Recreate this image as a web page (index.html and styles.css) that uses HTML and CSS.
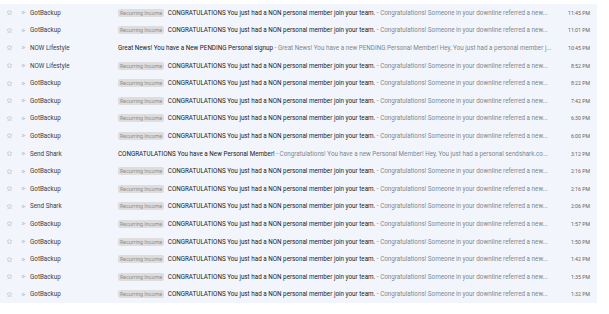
FILE: index.html
```html
<!DOCTYPE html>
<html lang="en">
<head>
  <meta charset="UTF-8" />
  <meta name="viewport" content="width=device-width, initial-scale=1.0" />
  <title>Inbox</title>
  <link rel="stylesheet" href="styles.css">
</head>
<body>
  <ul class="mail-list" id="mailList"></ul>

  <script>
    const congrats = {
      label: 'Recurring Income',
      subject: 'CONGRATULATIONS You just had a NON personal member join your team.',
      preview: 'Congratulations! Someone in your downline referred a new...'
    };

    const rows = [
      ['GotBackup', congrats, '11:45 PM'],
      ['GotBackup', congrats, '11:01 PM'],
      ['NOW Lifestyle', {
        subject: 'Great News! You have a New PENDING Personal signup',
        preview: 'Great News! You have a new PENDING Personal Member! Hey, You just had a personal member j...'
      }, '10:45 PM'],
      ['NOW Lifestyle', congrats, '8:52 PM'],
      ['GotBackup', congrats, '8:22 PM'],
      ['GotBackup', congrats, '7:42 PM'],
      ['GotBackup', congrats, '6:30 PM'],
      ['GotBackup', congrats, '6:00 PM'],
      ['Send Shark', {
        subject: 'CONGRATULATIONS You have a New Personal Member!',
        preview: 'Congratulations! You have a new Personal Member! Hey, You just had a personal sendshark.co...'
      }, '3:12 PM'],
      ['GotBackup', congrats, '2:16 PM'],
      ['GotBackup', congrats, '2:16 PM'],
      ['Send Shark', congrats, '2:06 PM'],
      ['GotBackup', congrats, '1:57 PM'],
      ['GotBackup', congrats, '1:50 PM'],
      ['GotBackup', congrats, '1:42 PM'],
      ['GotBackup', congrats, '1:35 PM'],
      ['GotBackup', congrats, '1:32 PM']
    ];

    const star = '<svg viewBox="0 0 24 24" width="7" height="7"><path d="M12 3.5l2.6 5.5 6 .7-4.5 4.1 1.2 5.9L12 16.7 6.7 19.7l1.2-5.9L3.4 9.7l6-.7z" fill="none" stroke="#b5b9be" stroke-width="1.8" stroke-linejoin="round"/></svg>';
    const chevron = '<svg viewBox="0 0 24 24" width="5" height="5"><path d="M5 6l6 6-6 6M12 6l6 6-6 6" fill="none" stroke="#9aa0a6" stroke-width="3.4"/></svg>';

    const list = document.getElementById('mailList');
    rows.forEach(([sender, mail, time]) => {
      const li = document.createElement('li');
      li.className = 'mail-row';
      li.innerHTML = `
        <span class="star">${star}</span>
        <span class="important">${chevron}</span>
        <span class="sender">${sender}</span>
        <span class="content">
          ${mail.label ? `<span class="label">${mail.label}</span>` : ''}
          <span class="subject">${mail.subject}</span>
          <span class="preview"> - ${mail.preview}</span>
        </span>
        <span class="time">${time}</span>`;
      list.appendChild(li);
    });
  </script>
</body>
</html>
```

FILE: styles.css
```css
* { box-sizing: border-box; }
body {
  margin: 0;
  background: #fff;
  font-family: Roboto, "Liberation Sans", Arial, sans-serif;
  color: #202124;
}
.mail-list {
  list-style: none;
  margin: 4px 0 0;
  padding: 0;
  width: 597px;
  background: #f2f6fc;
}
.mail-row {
  display: flex;
  align-items: center;
  height: 17.6px;
  font-size: 6.3px;
  white-space: nowrap;
}
.mail-row > span { flex-shrink: 0; }
.star {
  width: 17px;
  display: flex;
  justify-content: center;
  padding-left: 2px;
}
.important {
  width: 12px;
  display: flex;
  justify-content: center;
}
.star svg, .important svg { display: block; }
.sender {
  width: 89px;
  padding-left: 1px;
  color: #3c4043;
}
.content {
  width: 436px;
  overflow: hidden;
}
.label {
  background: #dddddd;
  color: #8f8f8f;
  border-radius: 2px;
  padding: 1px 2px;
  margin-right: 2px;
  font-size: 5.4px;
}
.subject { color: #202124; }
.preview { color: #80868b; }
.time {
  flex: 1;
  text-align: right;
  padding-right: 7px;
  font-size: 5.2px;
  color: #5f6368;
}
```
